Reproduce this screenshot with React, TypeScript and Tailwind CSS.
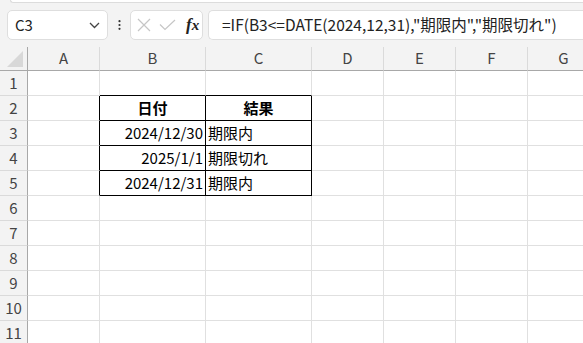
import React from "react";

const cols = [
  { name: "A", w: "w-[72px]" },
  { name: "B", w: "w-[106px]" },
  { name: "C", w: "w-[106px]" },
  { name: "D", w: "w-[72px]" },
  { name: "E", w: "w-[72px]" },
  { name: "F", w: "w-[72px]" },
  { name: "G", w: "w-[72px]" },
];

type Cell = { text: string; align: "left" | "right" | "center"; bold?: boolean };

const data: Record<string, Cell> = {
  "2B": { text: "日付", align: "center", bold: true },
  "2C": { text: "結果", align: "center", bold: true },
  "3B": { text: "2024/12/30", align: "right" },
  "3C": { text: "期限内", align: "left" },
  "4B": { text: "2025/1/1", align: "right" },
  "4C": { text: "期限切れ", align: "left" },
  "5B": { text: "2024/12/31", align: "right" },
  "5C": { text: "期限内", align: "left" },
};

const font = { fontFamily: '"Noto Sans CJK JP", "Noto Sans", sans-serif' };

function inTable(r: number, c: string) {
  return r >= 2 && r <= 5 && (c === "B" || c === "C");
}

export default function App() {
  const rows = Array.from({ length: 11 }, (_, i) => i + 1);
  return (
    <div className="w-[583px] h-[343px] overflow-hidden bg-[#f3f3f3] flex flex-col" style={font}>
      <div className="shrink-0 ml-[10px] h-[3px] bg-white border-b border-l border-[#dcdcdc] rounded-bl-[4px]" />
      <div className="shrink-0 flex items-center h-[30px] mt-[7px]">
        <div className="ml-[7px] w-[101px] h-[30px] bg-white border border-[#dedede] rounded-[5px] flex items-center justify-between pl-[7px] pr-[7px]">
          <span className="text-[15px] text-[#222]">C3</span>
          <svg width="11" height="7" viewBox="0 0 11 7" fill="none" stroke="#444" strokeWidth="1.3">
            <path d="M1 1l4.5 4.5L10 1" />
          </svg>
        </div>
        <div className="w-[22px] flex justify-center">
          <svg width="3" height="10" viewBox="0 0 3 10" fill="#333">
            <circle cx="1.5" cy="1.2" r="1.1" />
            <circle cx="1.5" cy="5" r="1.1" />
            <circle cx="1.5" cy="8.8" r="1.1" />
          </svg>
        </div>
        <div className="w-[73px] h-[30px] bg-white border border-[#dedede] rounded-[5px] flex items-center pl-[6px] gap-[8px]">
          <svg width="14" height="14" viewBox="0 0 14 14" stroke="#c6c6c6" strokeWidth="1.2" fill="none">
            <path d="M1 1l12 12M13 1L1 13" />
          </svg>
          <svg width="17" height="12" viewBox="0 0 17 12" stroke="#c6c6c6" strokeWidth="1.2" fill="none">
            <path d="M1 5.5l5 5L16 1" />
          </svg>
          <span className="text-[17px] text-[#222] italic ml-[2px] font-bold" style={{ fontFamily: '"Liberation Serif", serif' }}>
            f<span className="text-[15px]">x</span>
          </span>
        </div>
        <div className="ml-[5px] flex-1 h-[30px] bg-white border border-[#dedede] border-r-0 rounded-l-[5px] flex items-center pl-[13px] whitespace-nowrap">
          <span className="text-[15.5px] text-[#222]">=IF(B3&lt;=DATE(2024,12,31),"期限内","期限切れ")</span>
        </div>
      </div>
      <div className="shrink-0 mt-[7px] flex flex-col">
        <div className="flex h-[24px] shrink-0">
          <div className="w-[28px] shrink-0 border-r border-b border-[#a8a8a8] relative">
            <svg className="absolute right-[4px] bottom-[3px]" width="16" height="16" viewBox="0 0 16 16">
              <path d="M16 0V16H0Z" fill="#d8d8d8" />
            </svg>
          </div>
          {cols.map((c) => (
            <div
              key={c.name}
              className={`${c.w} shrink-0 border-r border-r-[#dadada] border-b border-b-[#a8a8a8] flex items-center justify-center text-[15px] text-[#444]`}
            >
              {c.name}
            </div>
          ))}
        </div>
        {rows.map((r) => (
          <div key={r} className="flex h-[25px] shrink-0">
            <div className="w-[28px] shrink-0 bg-[#f3f3f3] border-r border-r-[#a8a8a8] border-b border-b-[#dadada] flex items-center justify-center text-[15px] text-[#444]">
              {r}
            </div>
            {cols.map((c) => {
              const cell = data[`${r}${c.name}`];
              const rightBlack = inTable(r, c.name) || (c.name === "A" && r >= 2 && r <= 5);
              const bottomBlack = inTable(r, c.name) || (r === 1 && (c.name === "B" || c.name === "C"));
              return (
                <div
                  key={c.name}
                  className={`${c.w} shrink-0 bg-white border-r border-b ${rightBlack ? "border-r-black" : "border-r-[#e0e0e0]"} ${bottomBlack ? "border-b-black" : "border-b-[#e0e0e0]"} flex items-center px-[2px] text-[15px] text-black whitespace-nowrap ${
                    cell?.align === "right" ? "justify-end" : cell?.align === "center" ? "justify-center" : "justify-start"
                  } ${cell?.bold ? "font-bold" : ""}`}
                >
                  {cell?.text ?? ""}
                </div>
              );
            })}
          </div>
        ))}
      </div>
    </div>
  );
}
